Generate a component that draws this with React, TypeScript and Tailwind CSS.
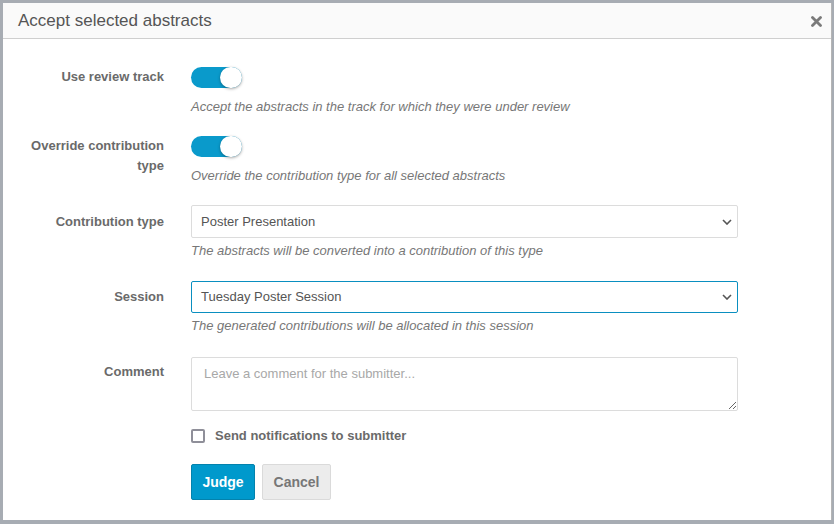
import React from 'react';

const font = { fontFamily: '"Liberation Sans", Arial, sans-serif' };

const Toggle = () => (
  <div className="relative h-[21px] w-[51px] rounded-full bg-[#0a9acb]">
    <div className="absolute right-0 top-0 h-[21px] w-[22px] rounded-full bg-white shadow-[0_1px_3px_rgba(0,0,0,0.35)]" />
  </div>
);

const Chevron = () => (
  <svg width="10" height="6" viewBox="0 0 10 6" className="absolute right-[5px] top-1/2 -translate-y-1/2">
    <path d="M1 1l4 4 4-4" fill="none" stroke="#555" strokeWidth="1.6" />
  </svg>
);

const Row = ({ label, labelPad, children }: { label: React.ReactNode; labelPad: string; children: React.ReactNode }) => (
  <div className="flex">
    <div className={`w-[146px] text-right text-[13px] font-bold leading-[20px] text-[#6a6a6a] ${labelPad}`}>{label}</div>
    <div className="ml-[27px] w-[547px]">{children}</div>
  </div>
);

const Help = ({ children, mt }: { children: React.ReactNode; mt: string }) => (
  <p className={`text-[13px] italic leading-[18px] text-[#777] ${mt}`}>{children}</p>
);

export default function App() {
  return (
    <div className="h-[524px] w-[834px] overflow-hidden bg-[#a7acb3] pl-[3px] pt-[3px]" style={font}>
      <div className="flex h-[517px] w-[829px] flex-col border-r border-[#b5b5b5] bg-white">
        <div className="flex h-[36px] items-center justify-between border-b border-[#cfcfcf] bg-[#fafafa] pl-[15px] pr-[9px]">
          <h2 className="text-[17px] leading-none text-[#555]">Accept selected abstracts</h2>
          <svg width="11" height="11" viewBox="0 0 11 11" className="mt-[2px]">
            <path d="M1.5 1.5l8 8M9.5 1.5l-8 8" stroke="#7a7a7a" strokeWidth="2.8" strokeLinecap="round" />
          </svg>
        </div>
        <div className="pl-[15px] pt-[28px]">
          <Row label="Use review track" labelPad="">
            <Toggle />
            <Help mt="mt-[10px]">Accept the abstracts in the track for which they were under review</Help>
          </Row>
          <div className="mt-[20px]">
            <Row label={<>Override contribution<br />type</>} labelPad="">
              <Toggle />
              <Help mt="mt-[10px]">Override the contribution type for all selected abstracts</Help>
            </Row>
          </div>
          <div className="mt-[20px]">
            <Row label="Contribution type" labelPad="pt-[7px]">
              <div className="relative flex h-[33px] items-center rounded-[2px] border border-[#dcdcdc] pl-[9px] text-[13px] text-[#555]">
                Poster Presentation
                <Chevron />
              </div>
              <Help mt="mt-[4px]">The abstracts will be converted into a contribution of this type</Help>
            </Row>
          </div>
          <div className="mt-[21px]">
            <Row label="Session" labelPad="pt-[6px]">
              <div className="relative flex h-[32px] items-center rounded-[2px] border border-[#0a8fc0] pl-[9px] text-[13px] text-[#555]">
                Tuesday Poster Session
                <Chevron />
              </div>
              <Help mt="mt-[4px]">The generated contributions will be allocated in this session</Help>
            </Row>
          </div>
          <div className="mt-[22px]">
            <Row label="Comment" labelPad="pt-[5px]">
              <textarea
                className="block h-[54px] w-full rounded-[2px] border border-[#dcdcdc] px-[12px] pt-[7px] text-[13px] leading-[18px] text-[#555] outline-none placeholder:text-[#a8a8a8]"
                placeholder="Leave a comment for the submitter..."
                style={font}
              />
              <div className="mt-[16px] flex items-center gap-[10px]">
                <div className="h-[14px] w-[14px] rounded-[2px] border-2 border-[#8f8f99]" />
                <span className="text-[13px] font-bold leading-[18px] text-[#6a6a6a]">Send notifications to submitter</span>
              </div>
              <div className="mt-[19px] flex gap-[7px]">
                <button className="h-[36px] w-[64px] rounded-[2px] border border-[#0382ad] bg-[#0099cc] text-[14px] font-bold text-white" style={font}>Judge</button>
                <button className="h-[36px] w-[69px] rounded-[2px] border border-[#dadada] bg-[#ececec] text-[14px] font-bold text-[#777]" style={font}>Cancel</button>
              </div>
            </Row>
          </div>
        </div>
      </div>
    </div>
  );
}
